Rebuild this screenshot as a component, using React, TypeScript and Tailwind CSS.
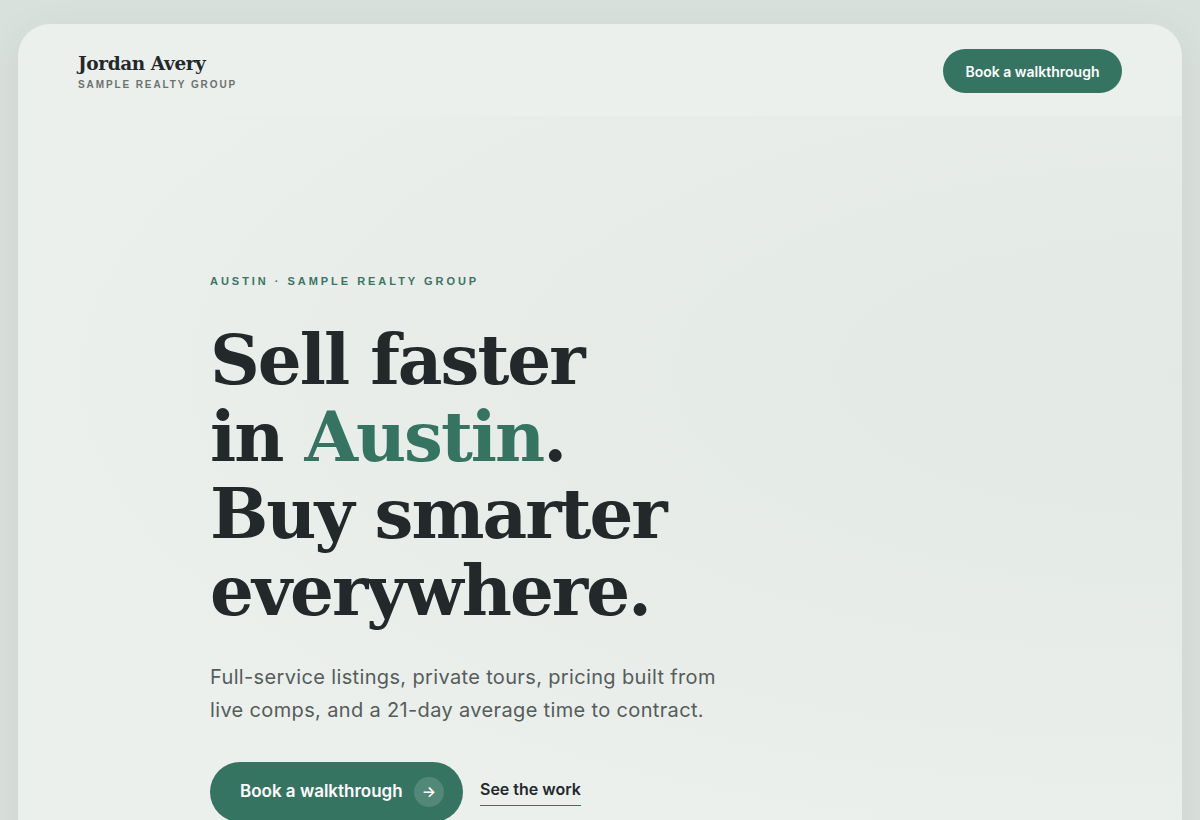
import React from "react";

const serif = { fontFamily: '"DejaVu Serif", "Liberation Serif", serif' };

export default function App() {
  return (
    <div className="min-h-[820px] w-full bg-[#d9e1dd] px-[18px] pt-[24px]" style={{ fontFamily: 'Inter, "Noto Sans", sans-serif' }}>
      <div className="h-[830px] overflow-hidden rounded-[32px] bg-[#ebf0ed] shadow-[0_10px_40px_rgba(40,60,50,0.08)]">
        <header className="flex h-[92px] items-center justify-between px-[60px]">
          <div className="flex flex-col pt-[2px]">
            <div className="text-[18.5px] font-bold leading-[24px] tracking-[-0.4px] text-[#23282b]" style={serif}>
              Jordan Avery
            </div>
            <div className="mt-[3px] text-[10px] font-bold uppercase leading-[12px] tracking-[0.19em] text-[#6b7270]" style={{ fontFamily: '"Liberation Sans", sans-serif' }}>
              Sample Realty Group
            </div>
          </div>
          <button className="mt-[2px] flex h-[44px] w-[179px] items-center justify-center rounded-full bg-[#367462] text-[14px] font-semibold text-white">
            Book a walkthrough
          </button>
        </header>
        <section className="h-[740px] bg-[radial-gradient(ellipse_at_100%_35%,#e3e9e5_0%,#e7ece9_40%,#ebf0ed_75%)] pl-[192px] pt-[158px]">
          <div className="text-[11px] font-bold uppercase leading-[14px] tracking-[0.27em] text-[#3a7563]" style={{ fontFamily: '"Liberation Sans", sans-serif' }}>
            Austin · Sample Realty Group
          </div>
          <h1 className="mt-[33px] text-[69px] font-bold leading-[77px] tracking-[-2px] text-[#23282b]" style={serif}>
            Sell faster
            <br />
            in <span className="text-[#367462]">Austin</span>.
            <br />
            Buy smarter
            <br />
            everywhere.
          </h1>
          <p className="mt-[32px] w-[522px] text-[20px] leading-[33px] tracking-[0.35px] text-[#555c5a]">
            Full-service listings, private tours, pricing built from live comps, and a 21-day average time to contract.
          </p>
          <div className="mt-[35px] flex items-center gap-[17px]">
            <button className="flex h-[60px] w-[253px] items-center justify-between rounded-full bg-[#367462] pl-[30px] pr-[19px] text-[17px] font-semibold text-white">
              Book a walkthrough
              <span className="flex h-[30px] w-[30px] items-center justify-center rounded-full bg-white/15 text-[15px]">→</span>
            </button>
            <a className="mb-[2px] border-b border-[#367462] pb-[4px] text-[16px] font-semibold text-[#23282b]">See the work</a>
          </div>
        </section>
      </div>
    </div>
  );
}
